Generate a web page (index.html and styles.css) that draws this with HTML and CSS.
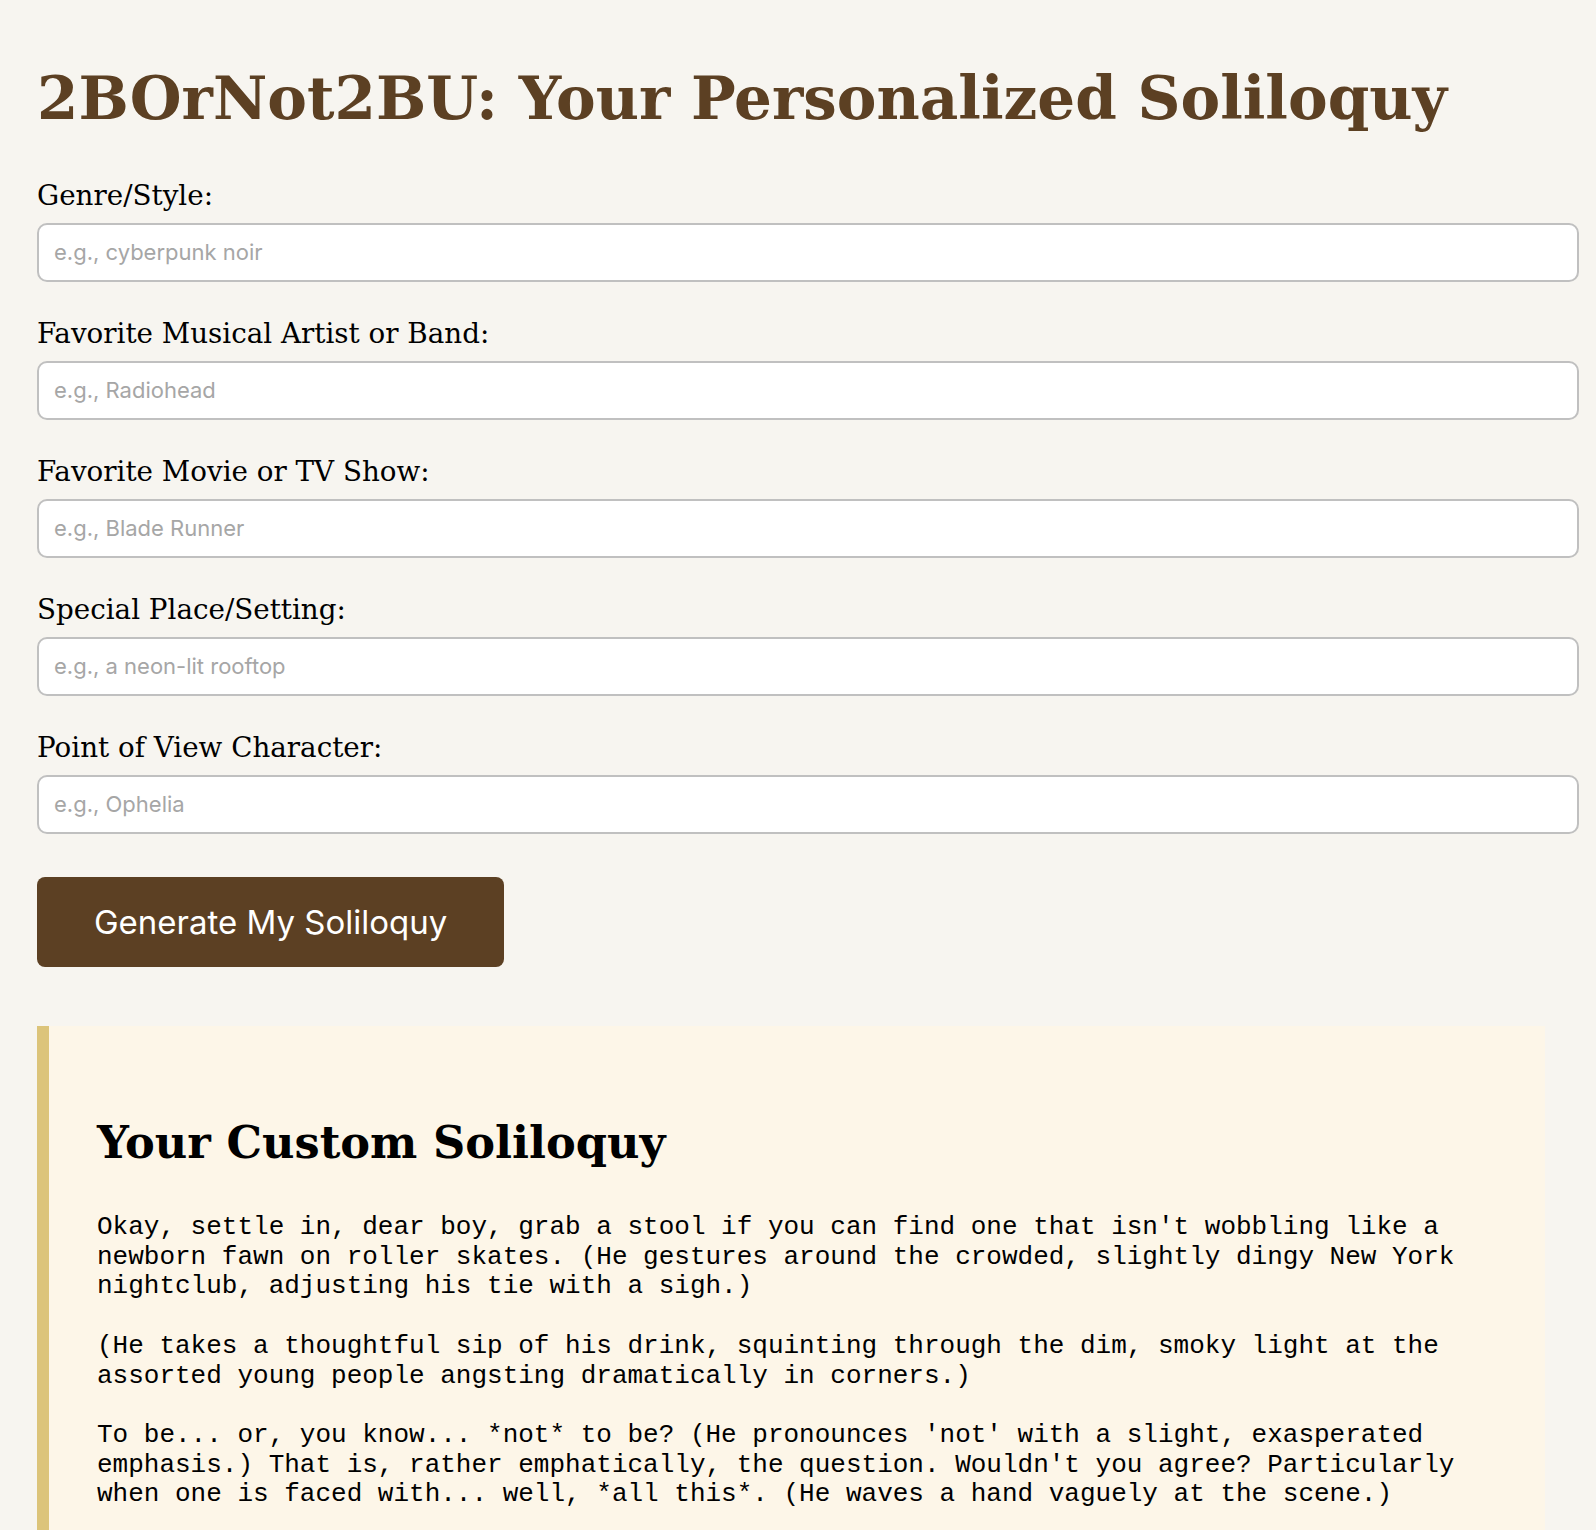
FILE: index.html
```html
<!DOCTYPE html>
<html lang="en">
<head>
<meta charset="utf-8">
<title>2BOrNot2BU</title>
<link rel="stylesheet" href="styles.css">
</head>
<body>
<main class="page">
  <h1 class="title">2BOrNot2BU: Your Personalized Soliloquy</h1>
  <form class="form">
    <div class="field">
      <label class="label" for="genre">Genre/Style:</label>
      <input class="input" id="genre" type="text" placeholder="e.g., cyberpunk noir">
    </div>
    <div class="field">
      <label class="label" for="artist">Favorite Musical Artist or Band:</label>
      <input class="input" id="artist" type="text" placeholder="e.g., Radiohead">
    </div>
    <div class="field">
      <label class="label" for="movie">Favorite Movie or TV Show:</label>
      <input class="input" id="movie" type="text" placeholder="e.g., Blade Runner">
    </div>
    <div class="field">
      <label class="label" for="place">Special Place/Setting:</label>
      <input class="input" id="place" type="text" placeholder="e.g., a neon-lit rooftop">
    </div>
    <div class="field">
      <label class="label" for="pov">Point of View Character:</label>
      <input class="input" id="pov" type="text" placeholder="e.g., Ophelia">
    </div>
    <div class="actions">
      <button class="button" type="button">Generate My Soliloquy</button>
    </div>
  </form>
  <section class="result">
    <h2 class="result-title">Your Custom Soliloquy</h2>
    <pre class="result-text">Okay, settle in, dear boy, grab a stool if you can find one that isn't wobbling like a newborn fawn on roller skates. (He gestures around the crowded, slightly dingy New York nightclub, adjusting his tie with a sigh.)

(He takes a thoughtful sip of his drink, squinting through the dim, smoky light at the assorted young people angsting dramatically in corners.)

To be... or, you know... *not* to be? (He pronounces 'not' with a slight, exasperated emphasis.) That is, rather emphatically, the question. Wouldn't you agree? Particularly when one is faced with... well, *all this*. (He waves a hand vaguely at the scene.)</pre>
  </section>
</main>
</body>
</html>
```

FILE: styles.css
```css
html, body {
  margin: 0;
  padding: 0;
}

body {
  background: #f7f5f0;
  color: #000;
  font-family: "DejaVu Serif", "Liberation Serif", serif;
}

.page {
  width: 1508px;
  padding: 60px 0 0 37px;
}

.title {
  margin: 0 0 41px;
  font-family: "DejaVu Serif", serif;
  font-weight: bold;
  font-size: 59.5px;
  line-height: 77px;
  color: #5c4023;
}

.form {
  display: flex;
  flex-direction: column;
  gap: 34px;
}

.field {
  display: flex;
  flex-direction: column;
}

.label {
  display: block;
  font-size: 27.75px;
  line-height: 36px;
  margin-bottom: 9px;
}

.input {
  display: block;
  width: 100%;
  box-sizing: content-box;
  margin: 0;
  padding: 15px;
  height: 25px;
  border: 2px solid #c0c0c0;
  border-radius: 10px;
  background: #fff;
  font-family: Inter, "Noto Sans", sans-serif;
  font-size: 22px;
  line-height: 25px;
  color: #000;
  outline: none;
}

.input::placeholder {
  color: #a6a6a6;
}

.actions {
  margin-top: 9px;
  display: flex;
}

.button {
  padding: 27px 57px;
  border: none;
  border-radius: 8px;
  background: #5c4023;
  color: #fff;
  font-family: Inter, "Noto Sans", sans-serif;
  font-size: 33px;
  line-height: 36px;
  cursor: pointer;
}

.result {
  margin-top: 59px;
  background: #fdf6e8;
  border-left: 12px solid #dcc47a;
  padding: 48px;
}

.result-title {
  margin: 40px 0 41px;
  font-family: "DejaVu Serif", serif;
  font-weight: bold;
  font-size: 44.7px;
  line-height: 58px;
  color: #000;
}

.result-text {
  margin: 0;
  white-space: pre-wrap;
  font-family: "Liberation Mono", "Courier New", monospace;
  font-size: 26px;
  line-height: 29.7px;
  color: #000;
}
```
